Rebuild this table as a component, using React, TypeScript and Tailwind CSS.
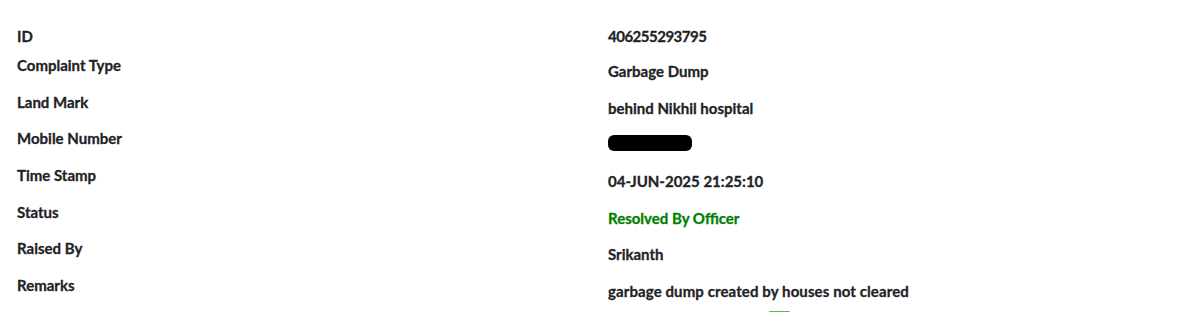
import React from "react";

const labels = [
  "ID",
  "Complaint Type",
  "Land Mark",
  "Mobile Number",
  "Time Stamp",
  "Status",
  "Raised By",
  "Remarks",
];

export default function App() {
  return (
    <div
      className="w-[1200px] h-[312px] overflow-hidden bg-white text-[#1f2326]"
      style={{ fontFamily: "Lato, 'Liberation Sans', sans-serif" }}
    >
      <div className="flex pt-[26px] pl-[17px] text-[15px] leading-5 font-bold [-webkit-text-stroke:0.3px_currentColor]">
        <div className="flex w-[591px] flex-col">
          {labels.map((l, i) => (
            <div key={l} className={i === 0 ? "h-[29px]" : "h-[36.67px]"}>
              {l}
            </div>
          ))}
        </div>
        <div className="flex flex-col">
          <div className="h-[35px] tracking-[-0.5px]">406255293795</div>
          <div className="h-[36.67px]">Garbage Dump</div>
          <div className="h-[36.67px]">behind Nikhil hospital</div>
          <div className="h-[36.67px] pt-[1px]">
            <div className="h-[16px] w-[84px] rounded-[6px] bg-black" />
          </div>
          <div className="h-[36.67px]">04-JUN-2025 21:25:10</div>
          <div className="h-[36.67px] text-[#008000]">Resolved By Officer</div>
          <div className="h-[36.67px]">Srikanth</div>
          <div className="h-[30px] tracking-[0.1px]">garbage dump created by houses not cleared</div>
          <div className="ml-[160px] h-[10px] w-[23px] rounded-t-[3px] bg-[#5cb85c]" />
        </div>
      </div>
    </div>
  );
}
